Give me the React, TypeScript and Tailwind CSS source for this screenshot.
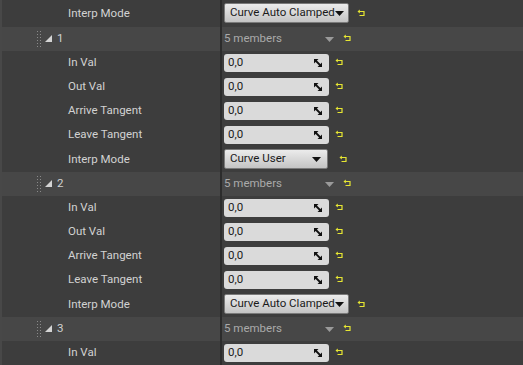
import React from "react";

const Reset = () => (
  <svg width="9" height="9" viewBox="0 0 9 9" className="shrink-0">
    <path d="M2 2.5 H7 V6.5 H2.5" fill="none" stroke="#e6e632" strokeWidth="1.2" />
    <path d="M0.5 2.5 L2.8 0.6 L2.8 4.4 Z" fill="#e6e632" />
  </svg>
);

const ResizeIcon = () => (
  <svg width="8" height="8" viewBox="0 0 8 8">
    <path d="M0 0 H4.5 L0 4.5 Z" fill="#111" />
    <path d="M8 8 H3.5 L8 3.5 Z" fill="#111" />
    <path d="M1 1 L7 7" stroke="#111" strokeWidth="1.8" />
  </svg>
);

const Grip = () => (
  <div className="grid grid-cols-2 gap-x-[2px] gap-y-[2px] w-[4px]">
    {Array.from({ length: 12 }).map((_, i) => (
      <div key={i} className="w-[1px] h-[1px] bg-[#8a8a8a]" />
    ))}
  </div>
);

const Tri = () => (
  <svg width="7" height="7" viewBox="0 0 7 7">
    <path d="M7 0 V7 H0 Z" fill="#d4d4d4" />
  </svg>
);

function NumRow({ label }: { label: string }) {
  return (
    <div className="flex h-[24px]">
      <div className="w-[218px] flex items-center pl-[66px] text-[#d2d2d2] whitespace-nowrap">{label}</div>
      <div className="w-[2px] bg-[#2c2c2c]" />
      <div className="flex items-center pl-[2px]">
        <div className="w-[105px] h-[18px] rounded-[3px] bg-[#dadada] flex items-center justify-between pl-[4px] pr-[7px] text-[#1a1a1a]">
          <span>0,0</span>
          <ResizeIcon />
        </div>
        <div className="ml-[6px] mt-[-2px]">
          <Reset />
        </div>
      </div>
    </div>
  );
}

function ComboRow({ value, wide, first }: { value: string; wide?: boolean; first?: boolean }) {
  return (
    <div className={`flex ${first ? "h-[27px]" : "h-[25px]"}`}>
      <div className="w-[218px] flex items-center pl-[66px] text-[#d2d2d2] whitespace-nowrap">{"Interp Mode"}</div>
      <div className="w-[2px] bg-[#2c2c2c]" />
      <div className={`flex items-start pl-[2px] ${first ? "pt-[3px]" : "pt-[2px]"}`}>
        <div
          className={`${wide ? "w-[125px]" : "w-[104px]"} h-[20px] rounded-[2px] border border-[#7a7a7a] bg-gradient-to-b from-[#ececec] to-[#c4c4c4] flex items-center justify-between pl-[5px] pr-[6px] text-[#1a1a1a] whitespace-nowrap`}
        >
          <span>{value}</span>
          <svg width="9" height="5" viewBox="0 0 9 5" className="shrink-0">
            <path d="M0 0 H9 L4.5 5 Z" fill="#111" />
          </svg>
        </div>
        <div className={`${wide ? "ml-[8px]" : "ml-[11px]"} mt-[6px]`}>
          <Reset />
        </div>
      </div>
    </div>
  );
}

function GroupRow({ n }: { n: string }) {
  return (
    <div className="flex h-[24px] bg-[#474747]">
      <div className="w-[218px] flex items-center pl-[35px] text-[#d2d2d2]">
        <Grip />
        <div className="ml-[4px] mt-[-2px]">
          <Tri />
        </div>
        <span className="ml-[5px]">{n}</span>
      </div>
      <div className="w-[2px] bg-[#2c2c2c]" />
      <div className="flex items-center pl-[2px]">
        <span className="w-[100px] text-[#aaaaaa] whitespace-nowrap">5 members</span>
        <svg width="9" height="5" viewBox="0 0 9 5" className="ml-[1px]">
          <path d="M0 0 H9 L4.5 5 Z" fill="#9a9a9a" />
        </svg>
        <div className="ml-[9px] mt-[-2px]">
          <Reset />
        </div>
      </div>
    </div>
  );
}

export default function App() {
  return (
    <div
      className="w-[523px] h-[365px] overflow-hidden bg-[#3d3d3d] text-[11.5px] flex"
      style={{ fontFamily: "Roboto, 'Open Sans', sans-serif" }}
    >
      <div className="w-[2px] bg-[#484848] shrink-0" />
      <div className="flex-1 flex flex-col">
        <ComboRow value="Curve Auto Clamped" wide first />
        <GroupRow n="1" />
        <NumRow label="In Val" />
        <NumRow label="Out Val" />
        <NumRow label="Arrive Tangent" />
        <NumRow label="Leave Tangent" />
        <ComboRow value="Curve User" />
        <GroupRow n="2" />
        <NumRow label="In Val" />
        <NumRow label="Out Val" />
        <NumRow label="Arrive Tangent" />
        <NumRow label="Leave Tangent" />
        <ComboRow value="Curve Auto Clamped" wide />
        <GroupRow n="3" />
        <NumRow label="In Val" />
      </div>
    </div>
  );
}
